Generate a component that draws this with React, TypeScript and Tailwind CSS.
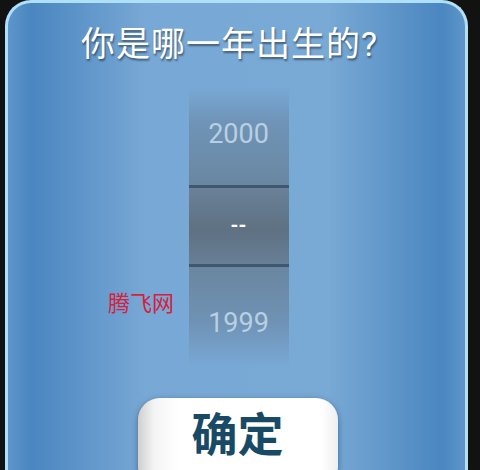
import type {FC} from "react";

const Wheel: FC = () => (
    <div className="flex w-[100px] flex-col items-stretch text-[#b9cfe3] bg-[linear-gradient(to_bottom,#78a8d5_0%,#6f94b7_35%,#6a87a1_100%)] h-[97px] justify-center">
        <div className="text-center text-[27px] leading-none pb-[4px]">2000</div>
    </div>
);

export default function App() {
    return (
        <div className="w-[480px] h-[470px] overflow-hidden bg-[#121212] pl-[5px] pr-[12px]"
             style={{fontFamily: '"Roboto","Noto Sans CJK SC",sans-serif'}}>
            <div className="relative h-[500px] w-[463px] rounded-t-[26px] border-[3px] border-b-0 border-[#b0e0f6] bg-[linear-gradient(to_right,#5e96cb_0%,#4a86c0_5%,#78a8d5_30%,#79a9d5_70%,#4a86c0_95%,#5e96cb_100%)] flex flex-col items-center">
                <h1 className="mt-[21px] mr-[14px] text-[34px] leading-[40px] tracking-[1px] text-white [text-shadow:1px_2px_2px_rgba(0,0,0,0.45)]">
                    你是哪一年出生的?
                </h1>

                <div className="mt-[24px] flex flex-col ml-[4px]">
                    <Wheel/>
                    <div className="h-[3px] bg-[#3f5770]"/>
                    <div className="flex h-[76px] w-[100px] items-center justify-center bg-[linear-gradient(to_bottom,#6a8199_0%,#5f7182_55%,#687f97_100%)] text-[20px] text-white font-bold leading-none">
                        <span className="-mt-[3px]">--</span>
                    </div>
                    <div className="h-[3px] bg-[#3f5770]"/>
                    <div className="flex w-[100px] h-[98px] flex-col bg-[linear-gradient(to_bottom,#6a86a0_0%,#6f92b4_55%,#78a8d5_100%)] text-[#b9cfe3]">
                        <div className="text-center text-[27px] leading-none pt-[43px]">1999</div>
                    </div>
                </div>

                <span className="absolute left-[100px] top-[290px] text-[22px] leading-none text-[#d8203c]">腾飞网</span>

                <div className="mt-[33px] ml-[2px] flex h-[90px] w-[200px] justify-center rounded-[22px] bg-[linear-gradient(to_right,#cfcfcf_0%,#f4f4f4_8%,#ffffff_20%,#ffffff_92%,#eeeeee_100%)] shadow-[0_2px_6px_rgba(20,50,90,0.5)]">
                    <span className="pt-[9px] text-[46px] font-bold leading-[56px] text-[#184a66]">确定</span>
                </div>
            </div>
        </div>
    );
}
